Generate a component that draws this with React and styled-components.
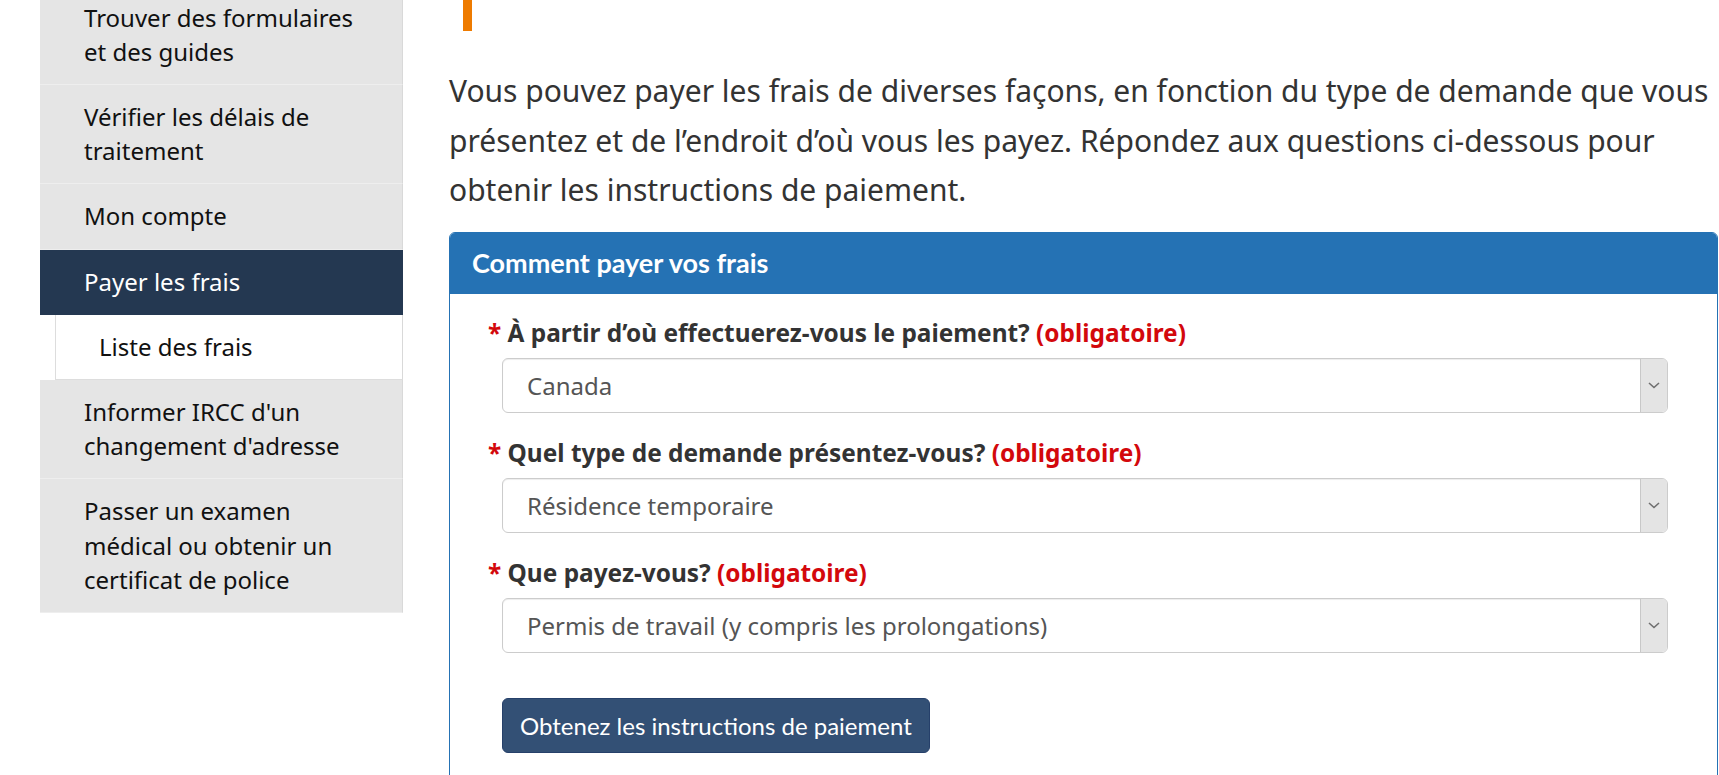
import React from 'react'
import styled, { createGlobalStyle } from 'styled-components'

const GlobalStyle = createGlobalStyle`
  html, body {
    margin: 0;
    padding: 0;
    background: #ffffff;
    overflow: hidden;
    height: 775px;
  }
  body {
    font-family: "Noto Sans", "DejaVu Sans", sans-serif;
    color: #333333;
  }
  * { box-sizing: border-box; }
`

const Page = styled.div`
  display: grid;
  grid-template-columns: 363px 1fr;
  column-gap: 46px;
  padding-left: 40px;
  padding-right: 1px;
  width: 1719px;
`

const Sidebar = styled.ul`
  list-style: none;
  margin: -14.4px 0 0;
  padding: 0;
  align-self: start;
`

const MenuItem = styled.li`
  margin-left: ${p => (p.$sub ? '15px' : '0')};
  padding: 15px 27px 15px ${p => (p.$sub ? '43px' : '44px')};
  font-size: 24px;
  line-height: 34.2px;
  color: ${p => (p.$active ? '#ffffff' : '#111111')};
  background: ${p => (p.$active ? '#243851' : p.$sub ? '#ffffff' : '#e5e5e5')};
  border-bottom: 1px solid ${p => (p.$active ? '#243851' : p.$sub ? '#dddddd' : '#eeeeee')};
  border-left: ${p => (p.$sub ? '1px solid #dddddd' : 'none')};
  border-right: 1px solid ${p => (p.$active ? '#243851' : '#d9d9d9')};
`

const Main = styled.main`
  display: flex;
  flex-direction: column;
  min-width: 0;
`

const TitleMark = styled.div`
  width: 9px;
  height: 31px;
  margin-left: 14px;
  background: #ee7b00;
`

const Lead = styled.p`
  margin: 35px 0 17px;
  font-size: 30px;
  line-height: 49.5px;
  color: #333333;
`

const Panel = styled.section`
  border: 1px solid #2572b4;
  border-radius: 6px 6px 0 0;
  background: #ffffff;
`

const PanelHeading = styled.div`
  background: #2572b4;
  padding: 15px 22px 16px;
  border-radius: 5px 5px 0 0;
`

const PanelTitle = styled.h3`
  margin: 0;
  font-family: Lato, "Liberation Sans", sans-serif;
  font-weight: 700;
  font-size: 27px;
  line-height: 30px;
  color: #ffffff;
`

const PanelBody = styled.form`
  padding: 22.5px 22px 22px;
`

const FormGroup = styled.div`
  margin-bottom: 23.5px;
`

const Label = styled.label`
  display: block;
  padding-left: 16px;
  margin-bottom: 7.5px;
  font-size: 24.4px;
  font-weight: 700;
  line-height: 34px;
  color: #333333;
`

const Required = styled.span`
  color: #d3080c;
`

const SelectWrap = styled.div`
  position: relative;
  margin: 0 27px 0 30px;
`

const Select = styled.select`
  display: block;
  width: 100%;
  height: 55px;
  padding: 9px 40px 9px 24px;
  border: 1px solid #cccccc;
  border-radius: 6px;
  background: #ffffff;
  box-shadow: inset 0 1px 1px rgba(0, 0, 0, 0.075);
  appearance: none;
  font-family: "Noto Sans", "DejaVu Sans", sans-serif;
  font-size: 24px;
  line-height: 35px;
  color: #555555;
`

const Arrow = styled.span`
  position: absolute;
  top: 1px;
  right: 1px;
  bottom: 1px;
  width: 27px;
  display: flex;
  align-items: center;
  justify-content: center;
  background: #e4e4e4;
  border-left: 1px solid #c8c8c8;
  border-radius: 0 5px 5px 0;
  pointer-events: none;
`

const SubmitButton = styled.button`
  margin: 21.5px 0 0 30px;
  padding: 9px 17px;
  border: 1px solid #26406a;
  border-radius: 6px;
  background: #335075;
  color: #ffffff;
  font-family: Lato, "Liberation Sans", sans-serif;
  font-size: 24px;
  line-height: 35px;
  cursor: pointer;
`

const Chevron = () => (
  <svg width="12" height="7" viewBox="0 0 12 7" aria-hidden="true">
    <polyline points="1,1 6,5.5 11,1" fill="none" stroke="#6f6f6f" strokeWidth="1.6" />
  </svg>
)

const menu = [
  { label: 'Trouver des formulaires et des guides' },
  { label: 'Vérifier les délais de traitement' },
  { label: 'Mon compte' },
  { label: 'Payer les frais', active: true },
  { label: 'Liste des frais', sub: true },
  { label: "Informer IRCC d'un changement d'adresse" },
  { label: 'Passer un examen médical ou obtenir un certificat de police' },
]

const questions = [
  { id: 'lieu', label: 'À partir d’où effectuerez-vous le paiement?', value: 'Canada' },
  { id: 'type', label: 'Quel type de demande présentez-vous?', value: 'Résidence temporaire' },
  { id: 'objet', label: 'Que payez-vous?', value: 'Permis de travail (y compris les prolongations)' },
]

const App = () => {
  return (
    <>
      <GlobalStyle />
      <Page>
        <Sidebar>
          {menu.map(item => (
            <MenuItem key={item.label} $active={item.active} $sub={item.sub}>
              {item.label}
            </MenuItem>
          ))}
        </Sidebar>
        <Main>
          <TitleMark />
          <Lead>
            Vous pouvez payer les frais de diverses façons, en fonction du type de demande que vous
            présentez et de l’endroit d’où vous les payez. Répondez aux questions ci-dessous pour
            obtenir les instructions de paiement.
          </Lead>
          <Panel>
            <PanelHeading>
              <PanelTitle>Comment payer vos frais</PanelTitle>
            </PanelHeading>
            <PanelBody onSubmit={e => e.preventDefault()}>
              {questions.map(q => (
                <FormGroup key={q.id}>
                  <Label htmlFor={q.id}>
                    <Required>*</Required> {q.label} <Required>(obligatoire)</Required>
                  </Label>
                  <SelectWrap>
                    <Select id={q.id} defaultValue={q.value}>
                      <option>{q.value}</option>
                    </Select>
                    <Arrow>
                      <Chevron />
                    </Arrow>
                  </SelectWrap>
                </FormGroup>
              ))}
              <SubmitButton type="submit">Obtenez les instructions de paiement</SubmitButton>
            </PanelBody>
          </Panel>
        </Main>
      </Page>
    </>
  )
}

export default App
